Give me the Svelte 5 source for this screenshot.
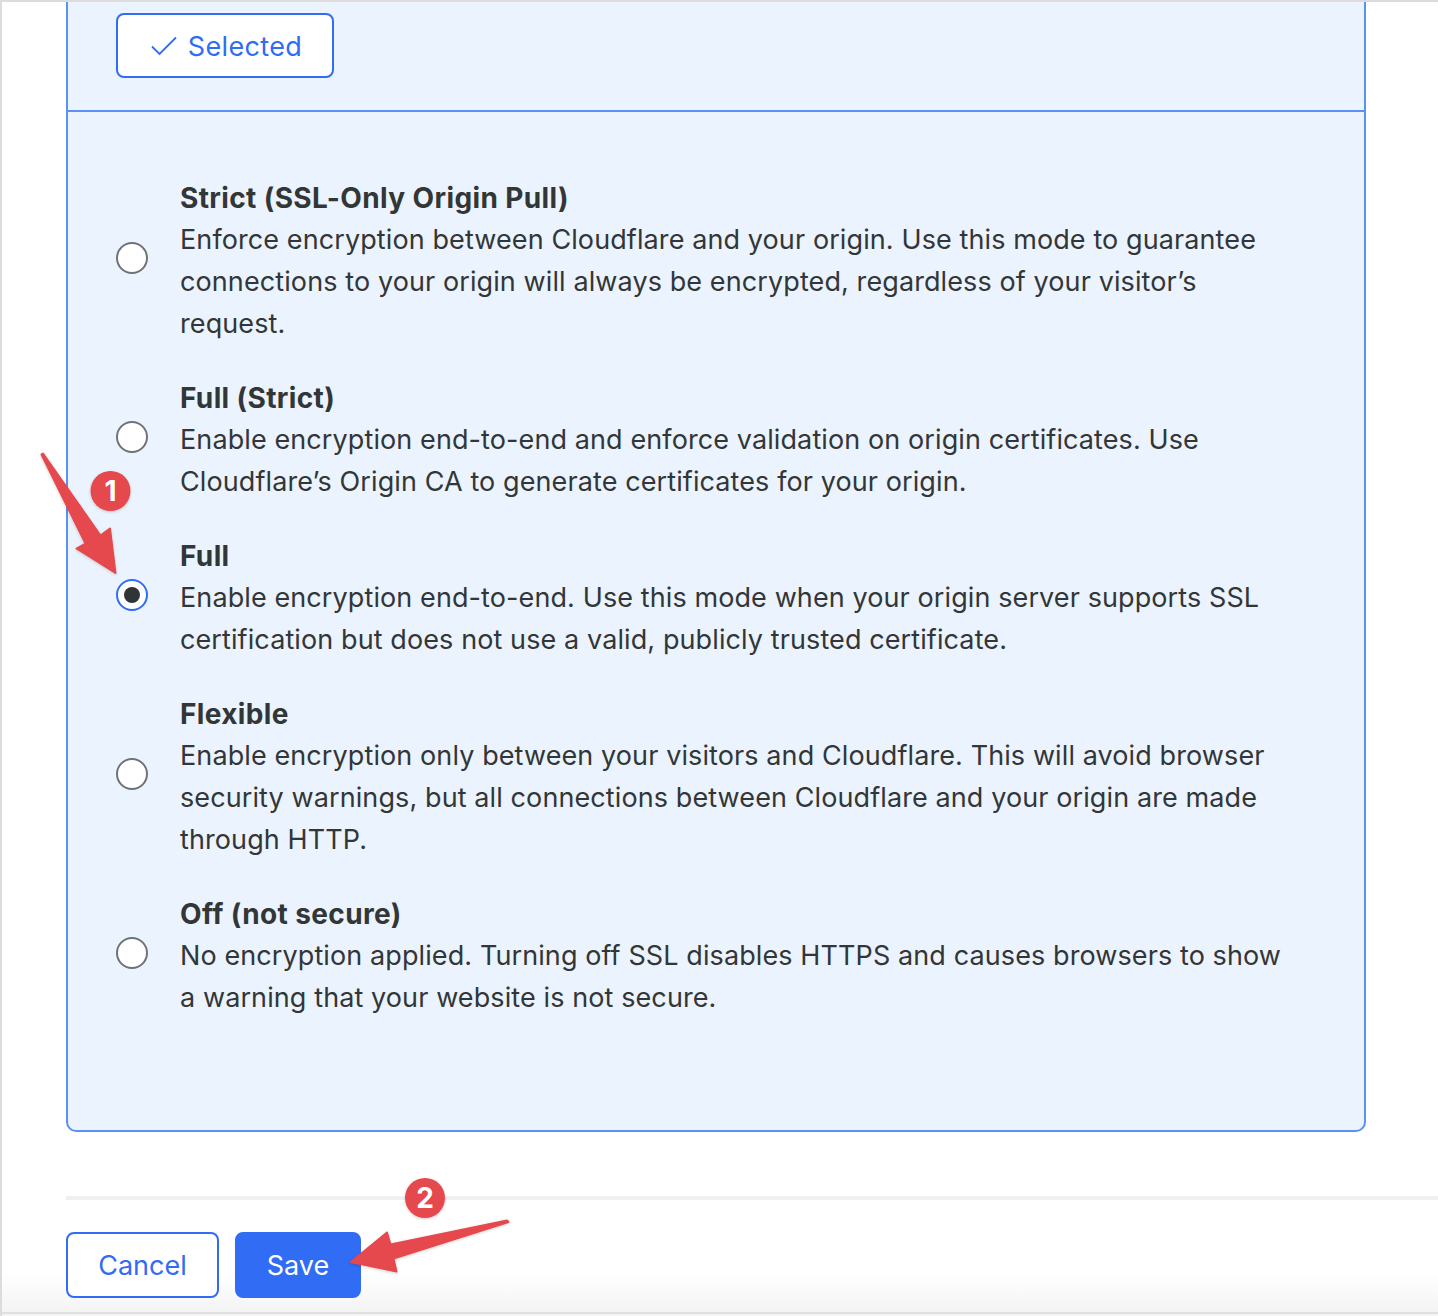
<script lang="ts">
	const options = [
		{
			title: 'Strict (SSL-Only Origin Pull)',
			text: 'Enforce encryption between Cloudflare and your origin. Use this mode to guarantee connections to your origin will always be encrypted, regardless of your visitor’s request.',
			checked: false
		},
		{
			title: 'Full (Strict)',
			text: 'Enable encryption end-to-end and enforce validation on origin certificates. Use Cloudflare’s Origin CA to generate certificates for your origin.',
			checked: false
		},
		{
			title: 'Full',
			text: 'Enable encryption end-to-end. Use this mode when your origin server supports SSL certification but does not use a valid, publicly trusted certificate.',
			checked: true
		},
		{
			title: 'Flexible',
			text: 'Enable encryption only between your visitors and Cloudflare. This will avoid browser security warnings, but all connections between Cloudflare and your origin are made through HTTP.',
			checked: false
		},
		{
			title: 'Off (not secure)',
			text: 'No encryption applied. Turning off SSL disables HTTPS and causes browsers to show a warning that your website is not secure.',
			checked: false
		}
	];
</script>

<div class="frame">
	<section class="panel">
		<div class="panel-head">
			<button class="btn selected">
				<svg width="28" height="20" viewBox="0 0 28 20" fill="none">
					<path d="M2 10.500 L9.500 18 L26 1.500" stroke="currentColor" stroke-width="1.800" />
				</svg>
				<span>Selected</span>
			</button>
		</div>
		<div class="panel-body">
			{#each options as opt}
				<label class="option">
					<span class="radio" class:checked={opt.checked}></span>
					<span class="copy">
						<strong>{opt.title}</strong>
						<span class="desc">{opt.text}</span>
					</span>
				</label>
			{/each}
		</div>
	</section>

	<footer class="actions">
		<button class="btn cancel">Cancel</button>
		<button class="btn save">Save</button>
	</footer>

	<svg class="overlay" width="1438" height="1316" viewBox="0 0 1438 1316">
		<defs>
			<filter id="soft" x="-20%" y="-20%" width="140%" height="140%">
				<feDropShadow dx="0" dy="1" stdDeviation="1.500" flood-color="#000" flood-opacity="0.18" />
			</filter>
		</defs>
		<g filter="url(#soft)" fill="#e5484d" stroke="#e5484d" stroke-width="2" stroke-linejoin="round">
			<path d="M43 453.500 L100.500 535.500 L110 528.500 L115.500 573 L76.500 548.500 L85.500 543.500 L41.500 454.500 Z" />
			<path d="M507 1220.500 L390.500 1244.500 L387 1232.500 L351 1262 L396.500 1271.500 L393.500 1258.500 L508.500 1222 Z" />
		</g>
		<g filter="url(#soft)" fill="#e5484d">
			<circle cx="110.500" cy="491" r="20" />
			<circle cx="425" cy="1198" r="20" />
		</g>
		<text x="110.500" y="501" class="badge">1</text>
		<text x="425" y="1208" class="badge">2</text>
	</svg>
</div>

<style>
	:global(body) {
		margin: 0;
		background: #fff;
	}
	.frame {
		position: relative;
		box-sizing: border-box;
		width: 1438px;
		height: 1316px;
		padding-left: 64px;
		overflow: hidden;
		font-family: Inter, 'Liberation Sans', sans-serif;
		font-size: 27px;
		color: #333637;
		background: linear-gradient(to bottom, #fff 1270px, #f4f4f4 1310px, #e0e0e0 1310px, #e0e0e0 1312px, #f4f4f4 1312px);
		border-top: 2px solid #dcdcdc;
		border-left: 2px solid #dcdcdc;
	}
	.panel {
		box-sizing: border-box;
		width: 1300px;
		height: 1130px;
		background: #ebf3fe;
		border: 2px solid #5b91f5;
		border-top: 0;
		border-radius: 0 0 10px 10px;
	}
	.panel-head {
		box-sizing: border-box;
		height: 110px;
		padding: 11px 0 0 48px;
		border-bottom: 2px solid #5b91f5;
	}
	.btn {
		box-sizing: border-box;
		font: inherit;
		border-radius: 8px;
		border: 2px solid #316cf4;
		color: #316cf4;
		background: #fff;
	}
	.selected {
		display: flex;
		align-items: center;
		justify-content: center;
		gap: 10px;
		width: 218px;
		height: 65px;
		padding: 2px 0 0 2px;
		letter-spacing: 0.35px;
	}
	.selected svg {
		margin-top: -2px;
	}
	.panel-body {
		display: flex;
		flex-direction: column;
		gap: 32px;
		padding: 65px 48px 0;
	}
	.option {
		display: flex;
		align-items: center;
		gap: 32px;
	}
	.radio {
		box-sizing: border-box;
		flex: none;
		position: relative;
		width: 32px;
		height: 32px;
		margin-bottom: 6px;
		border-radius: 50%;
		background: #fff;
		border: 2px solid #6f7375;
	}
	.radio.checked {
		border-color: #316cf4;
	}
	.radio.checked::after {
		content: '';
		position: absolute;
		inset: 6px;
		border-radius: 50%;
		background: #313436;
	}
	.copy {
		display: block;
		width: 1110px;
		line-height: 42px;
		letter-spacing: 0.1px;
	}
	.copy strong {
		display: block;
		font-size: 28px;
		font-weight: 650;
		letter-spacing: 0.37px;
	}
	.desc {
		display: block;
	}
	.actions {
		display: flex;
		gap: 16px;
		margin-top: 64px;
		padding-top: 32px;
		border-top: 4px solid #f0f0f0;
	}
	.cancel {
		width: 153px;
		height: 66px;
	}
	.save {
		width: 126px;
		height: 66px;
		background: #316cf4;
		color: #fff;
	}
	.overlay {
		position: absolute;
		left: -2px;
		top: -2px;
		pointer-events: none;
	}
	.badge {
		font-family: Inter, sans-serif;
		font-size: 28px;
		font-weight: 700;
		fill: #fff;
		text-anchor: middle;
	}
</style>
